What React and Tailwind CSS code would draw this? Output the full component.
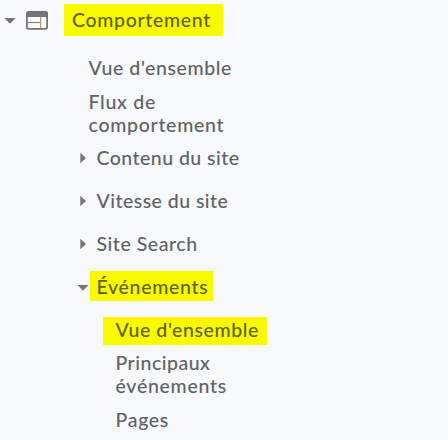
import React from "react";

const ArrowDown = ({ className = "" }) => (
  <svg className={`shrink-0 ${className}`} width="12" height="6" viewBox="0 0 12 6" fill="#757575">
    <path d="M0.5 0h11L6 5.8z" />
  </svg>
);

const ArrowRight = () => (
  <svg className="shrink-0" width="6" height="12" viewBox="0 0 6 12" fill="#757575">
    <path d="M0.3 0.8v10.4L6 6z" />
  </svg>
);

const BehaviorIcon = () => (
  <svg className="block shrink-0" width="22" height="19" viewBox="0 0 22 19">
    <rect x="0.9" y="1" width="20.2" height="16.8" rx="1.6" fill="#fbfbfc" stroke="#757278" strokeWidth="1.8" />
    <path d="M0.5 1.5h21V6H0.5z" fill="#757278" />
    <path d="M2 11.5h12.5" stroke="#858288" strokeWidth="1.2" />
    <path d="M14.6 6v11" stroke="#b9976b" strokeWidth="1.2" />
  </svg>
);

const groups = [
  { label: "Contenu du site", spacing: "tracking-[0.46px]" },
  { label: "Vitesse du site", spacing: "tracking-[0.46px]" },
  { label: "Site Search", spacing: "tracking-[0.54px]" },
];

function App() {
  return (
    <nav className="h-[440px] w-[448px] overflow-hidden bg-[#f8f9fb] pt-1 font-['Lato',sans-serif] text-[19.5px] leading-[23px] font-medium text-[#5f6166]">
      {/* Section header */}
      <div className="flex h-8 items-center pl-[4px]">
        <ArrowDown className="mt-px" />
        <span className="ml-[10px]">
          <BehaviorIcon />
        </span>
        <span className="ml-4 flex h-8 w-[159px] items-center bg-[#f9f900] pb-px pl-2 tracking-[0.68px] text-[#5f6100]">
          Comportement
        </span>
      </div>

      <ul className="mt-5 space-y-[11px] pl-[88.5px]">
        <li className="tracking-[0.6px]">Vue d'ensemble</li>
        <li className="w-[145px] tracking-[0.72px]">Flux de comportement</li>
      </ul>

      <ul className="mt-[10px] space-y-5 pl-[80px]">
        {groups.map((group) => (
          <li key={group.label} className={`flex items-center gap-[10.5px] ${group.spacing}`}>
            <ArrowRight />
            {group.label}
          </li>
        ))}
      </ul>

      {/* Expanded group */}
      <div className="mt-4 flex h-[30px] items-center pl-[77px]">
        <ArrowDown className="mt-[3px]" />
        <span className="ml-px h-[30px] w-[123px] bg-[#f9f900] pt-1 pl-[6.5px] tracking-[0.7px] text-[#5f6100]">
          Événements
        </span>
      </div>
      <div className="mt-4 ml-[103px] h-7 w-[164px] bg-[#f9f900] pt-px pl-[12.5px] tracking-[0.6px] text-[#5f6100]">
        Vue d'ensemble
      </div>
      <ul className="mt-[6px] space-y-[11px] pl-[115.5px]">
        <li className="w-[130px]">
          <span className="block tracking-[0.5px]">Principaux</span>
          <span className="block tracking-[0.72px]">événements</span>
        </li>
        <li className="tracking-[0.7px]">Pages</li>
      </ul>
    </nav>
  );
}

export default App;
